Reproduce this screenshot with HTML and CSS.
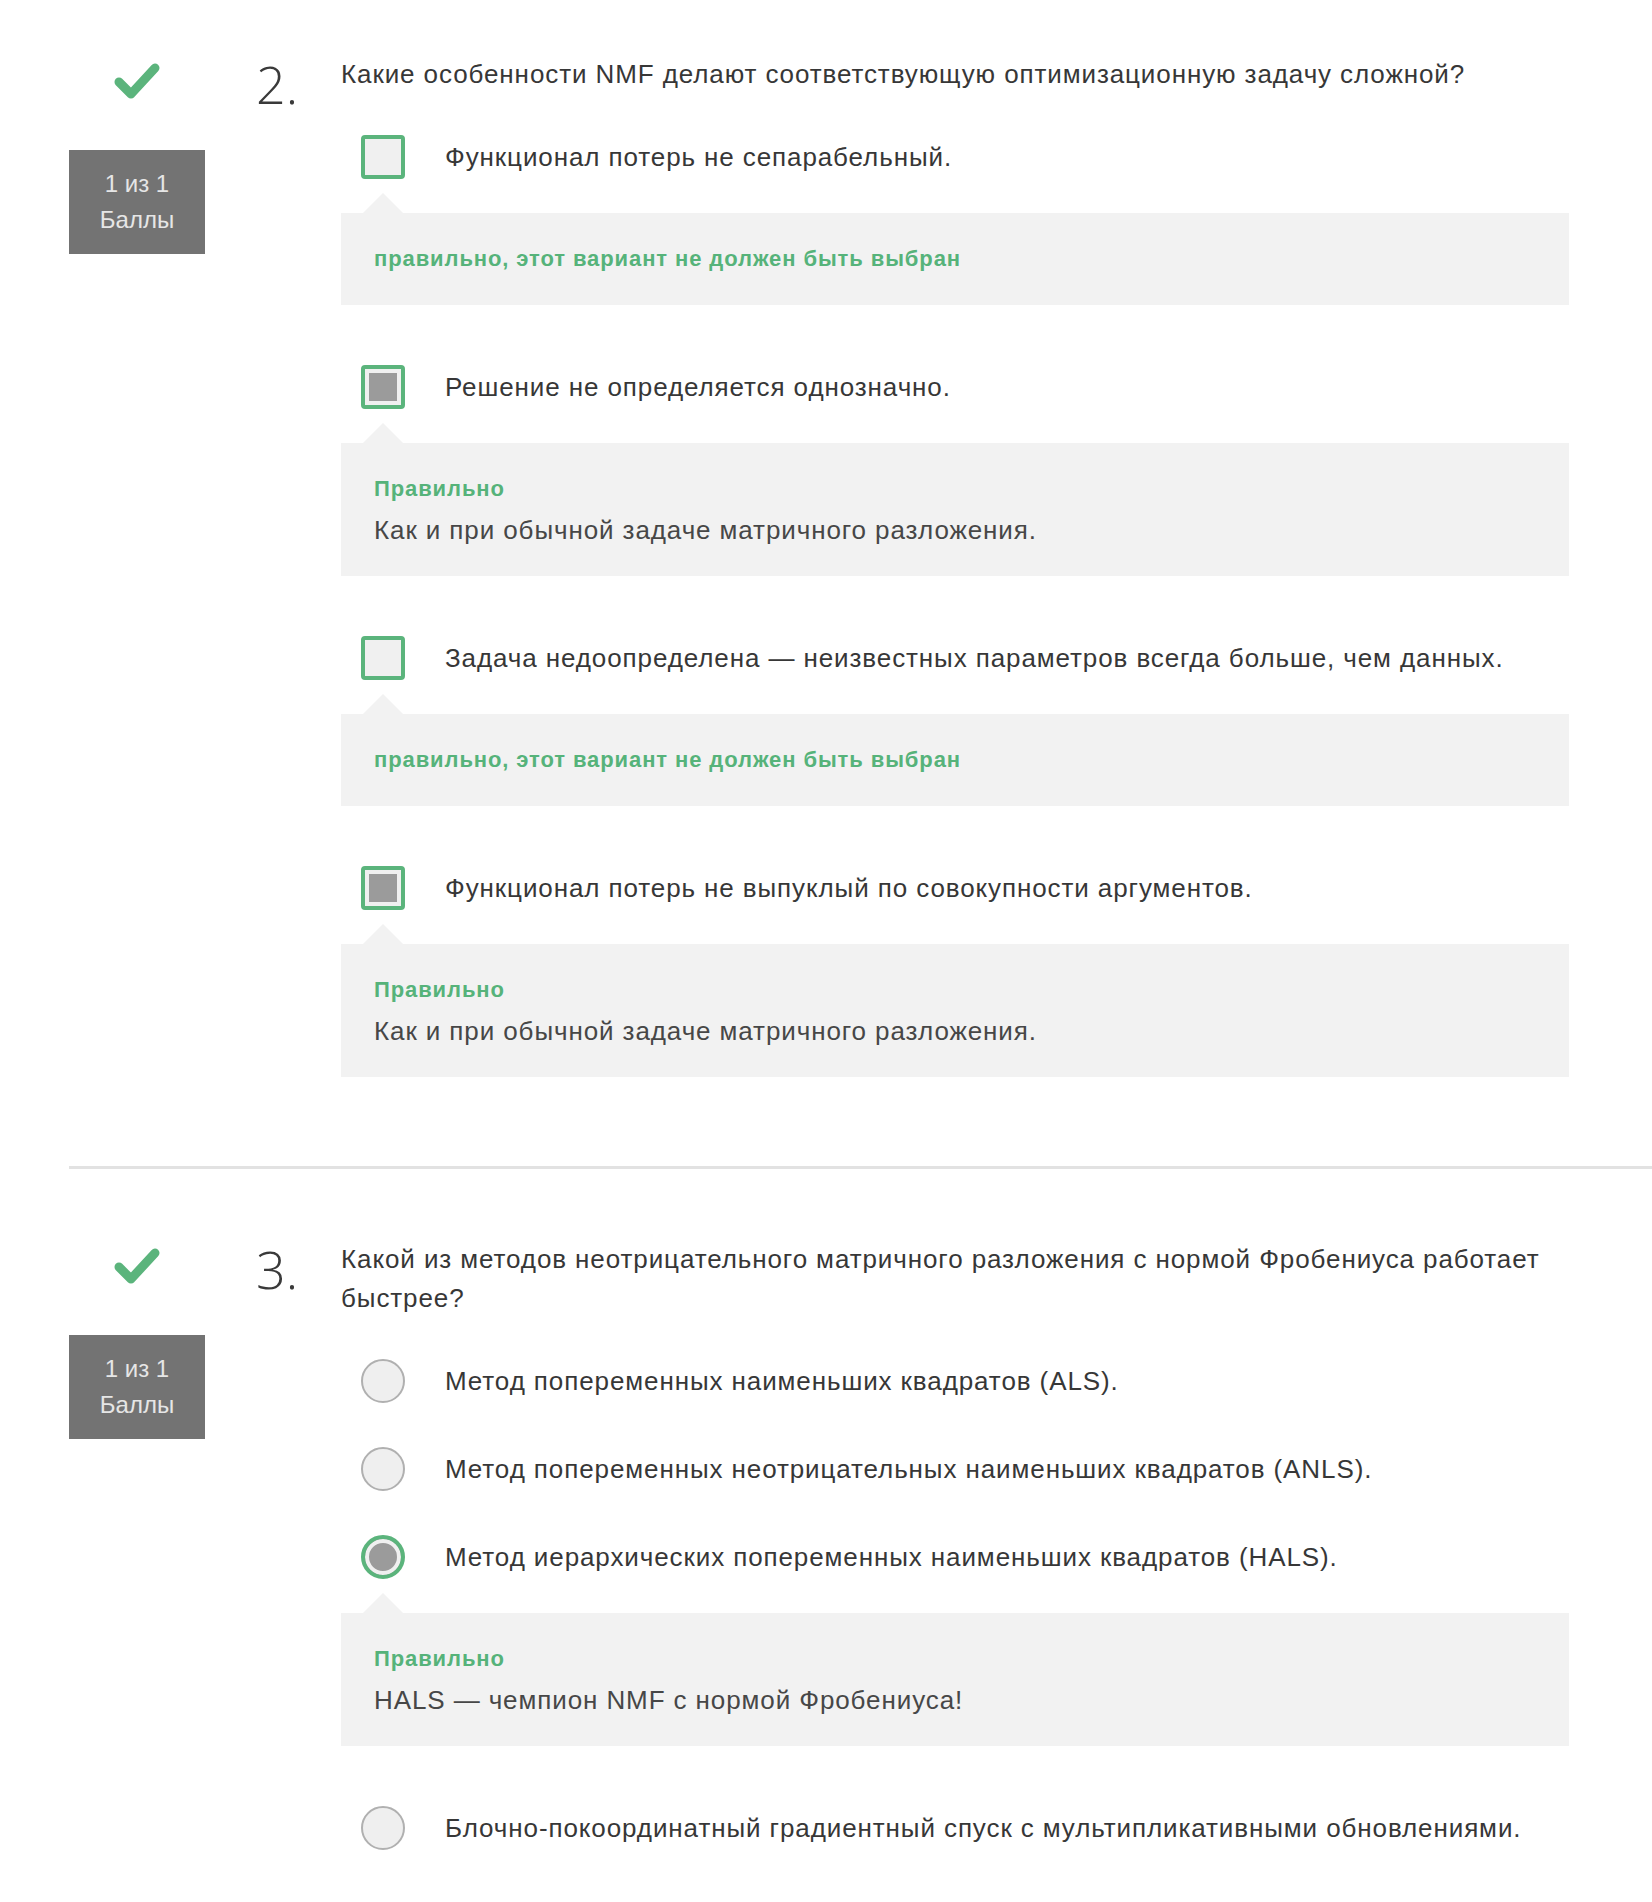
FILE: index.html
```
<!DOCTYPE html>
<html lang="ru">
<head>
<meta charset="utf-8">
<title>Quiz</title>
<link rel="stylesheet" href="styles.css">
</head>
<body>
<section class="q q-first">
  <div class="q-side">
    <svg class="check" viewBox="0 0 46 36" width="46" height="36"><polyline points="5,19 17,31 41,5" fill="none" stroke="#5bb47c" stroke-width="9" stroke-linecap="round" stroke-linejoin="round"/></svg>
    <div class="score">1 из 1<br>Баллы</div>
  </div>
  <div class="q-num">2.</div>
  <div class="q-body">
    <div class="q-text">Какие особенности NMF делают соответствующую оптимизационную задачу сложной?</div>
    <div class="opts">
      <div class="opt">
        <div class="opt-row"><span class="box"></span><span class="opt-text">Функционал потерь не сепарабельный.</span></div>
        <div class="fb"><div class="fb-title">правильно, этот вариант не должен быть выбран</div></div>
      </div>
      <div class="opt">
        <div class="opt-row"><span class="box checked"></span><span class="opt-text">Решение не определяется однозначно.</span></div>
        <div class="fb"><div class="fb-title">Правильно</div><div class="fb-text">Как и при обычной задаче матричного разложения.</div></div>
      </div>
      <div class="opt">
        <div class="opt-row"><span class="box"></span><span class="opt-text">Задача недоопределена — неизвестных параметров всегда больше, чем данных.</span></div>
        <div class="fb"><div class="fb-title">правильно, этот вариант не должен быть выбран</div></div>
      </div>
      <div class="opt">
        <div class="opt-row"><span class="box checked"></span><span class="opt-text">Функционал потерь не выпуклый по совокупности аргументов.</span></div>
        <div class="fb"><div class="fb-title">Правильно</div><div class="fb-text">Как и при обычной задаче матричного разложения.</div></div>
      </div>
    </div>
  </div>
</section>
<hr class="divider">
<section class="q">
  <div class="q-side">
    <svg class="check" viewBox="0 0 46 36" width="46" height="36"><polyline points="5,19 17,31 41,5" fill="none" stroke="#5bb47c" stroke-width="9" stroke-linecap="round" stroke-linejoin="round"/></svg>
    <div class="score">1 из 1<br>Баллы</div>
  </div>
  <div class="q-num">3.</div>
  <div class="q-body">
    <div class="q-text">Какой из методов неотрицательного матричного разложения с нормой Фробениуса работает быстрее?</div>
    <div class="opts">
      <div class="opt">
        <div class="opt-row"><span class="radio"></span><span class="opt-text">Метод попеременных наименьших квадратов (ALS).</span></div>
      </div>
      <div class="opt">
        <div class="opt-row"><span class="radio"></span><span class="opt-text">Метод попеременных неотрицательных наименьших квадратов (ANLS).</span></div>
      </div>
      <div class="opt">
        <div class="opt-row"><span class="radio selected"></span><span class="opt-text">Метод иерархических попеременных наименьших квадратов (HALS).</span></div>
        <div class="fb"><div class="fb-title">Правильно</div><div class="fb-text">HALS — чемпион NMF с нормой Фробениуса!</div></div>
      </div>
      <div class="opt">
        <div class="opt-row"><span class="radio"></span><span class="opt-text">Блочно-покоординатный градиентный спуск с мультипликативными обновлениями.</span></div>
      </div>
    </div>
  </div>
</section>
</body>
</html>
```
FILE: styles.css
```
html, body {
  margin: 0;
  padding: 0;
  background: #ffffff;
}
body {
  font-family: "Liberation Sans", Arial, sans-serif;
  color: #373737;
}
.q {
  display: flex;
  align-items: flex-start;
  padding-left: 69px;
}
.q-first {
  padding-top: 55px;
}
.q-side {
  width: 136px;
  flex: none;
  display: flex;
  flex-direction: column;
  align-items: center;
  padding-top: 8px;
}
.check {
  display: block;
}
.score {
  margin-top: 51px;
  width: 100%;
  background: #737373;
  color: #e6e6e6;
  font-size: 24px;
  line-height: 36px;
  text-align: center;
  padding: 16px 0;
}
.q-num {
  width: 85px;
  flex: none;
  padding-left: 51px;
  margin-top: 3px;
  font-family: "Open Sans", sans-serif;
  font-weight: 300;
  font-size: 52px;
  line-height: 52px;
  color: #3a3a3a;
}
.q-body {
  width: 1228px;
  flex: none;
}
.q-text {
  font-size: 26px;
  letter-spacing: 0.9px;
  line-height: 39px;
  color: #373737;
}
.opts {
  margin-top: 41px;
  display: flex;
  flex-direction: column;
  gap: 44px;
}
.opt-row {
  display: flex;
  align-items: center;
  height: 44px;
  padding-left: 20px;
}
.opt-text {
  margin-left: 40px;
  font-size: 26px;
  letter-spacing: 0.9px;
  line-height: 36px;
  color: #373737;
}
.box {
  flex: none;
  box-sizing: border-box;
  width: 44px;
  height: 44px;
  border: 4px solid #5bb47c;
  border-radius: 4px;
  background: #f0f0f0;
}
.box.checked {
  background: #9b9b9b;
  box-shadow: inset 0 0 0 4px #f0f0f0;
}
.radio {
  flex: none;
  box-sizing: border-box;
  width: 44px;
  height: 44px;
  border: 2px solid #b0b0b0;
  border-radius: 50%;
  background: #efefef;
}
.radio.selected {
  border: 4px solid #5bb47c;
  background: #9b9b9b;
  box-shadow: inset 0 0 0 4px #f0f0f0;
}
.fb {
  position: relative;
  margin-top: 34px;
  margin-bottom: 16px;
  background: #f2f2f2;
  padding: 32px 33px;
}
.fb::before {
  content: "";
  position: absolute;
  left: 22px;
  top: -20px;
  border-left: 20px solid transparent;
  border-right: 20px solid transparent;
  border-bottom: 20px solid #f2f2f2;
}
.fb-title {
  color: #56b37a;
  font-weight: bold;
  font-size: 22px;
  letter-spacing: 0.9px;
  line-height: 28px;
}
.fb-text {
  margin-top: 13px;
  font-size: 26px;
  letter-spacing: 0.9px;
  line-height: 28px;
  color: #474747;
}
.divider {
  border: 0;
  height: 3px;
  background: #e2e2e2;
  margin: 73px 0 71px 69px;
}
```
